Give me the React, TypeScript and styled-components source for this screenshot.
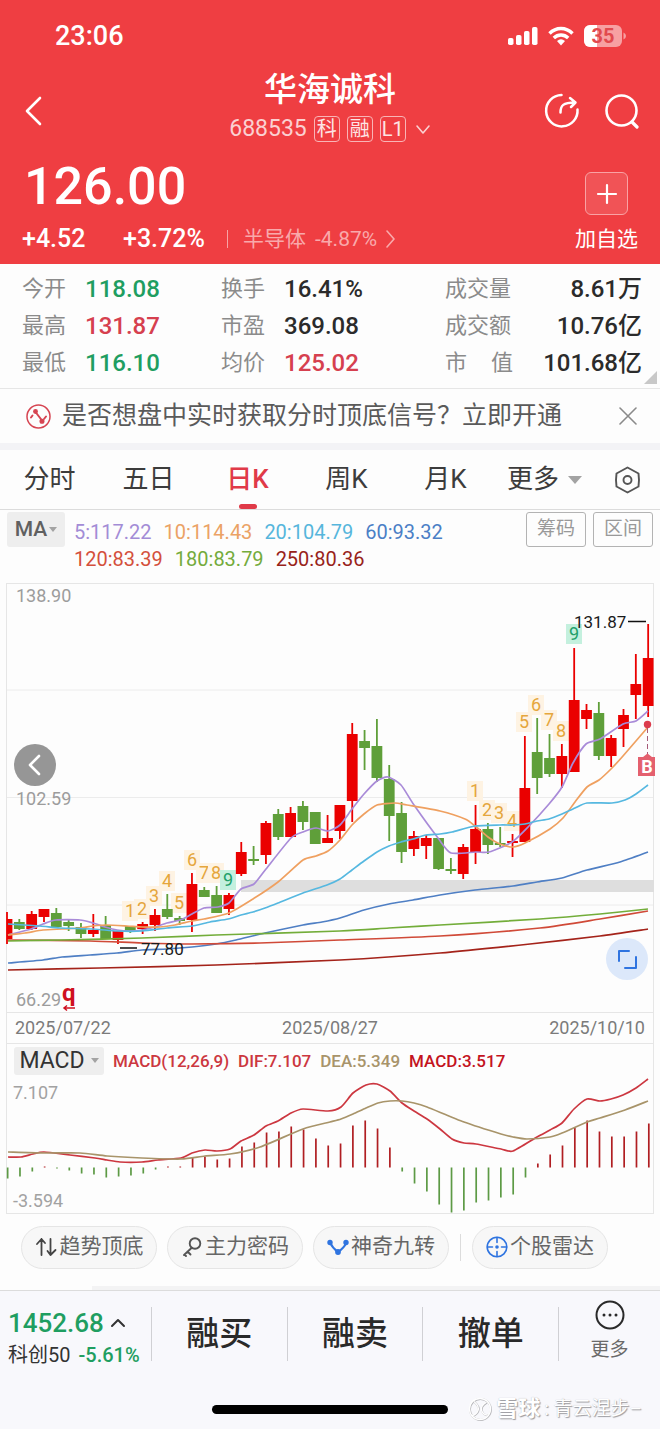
import React from 'react';
import styled, { createGlobalStyle, css } from 'styled-components';

const GlobalStyle = createGlobalStyle`
  * { box-sizing: border-box; }
  body {
    margin: 0;
    background: #fdfdfd;
    color: #333;
    font-family: Roboto, "Noto Sans CJK SC", sans-serif;
    font-size: 22px;
    line-height: 1.2;
  }
  button {
    margin: 0;
    padding: 0;
    border: 0;
    background: none;
    color: inherit;
    font: inherit;
    cursor: pointer;
    white-space: nowrap;
  }
  svg { display: block; flex-shrink: 0; }
`;

const RED = '#ef3e42';
const UP = '#d6404f';
const DOWN = '#1f9e61';
const LINE = '#e6e6e6';

const Page = styled.main`
  display: flex;
  flex-direction: column;
  min-height: 100vh;
`;

/* ---------- header ---------- */

const Header = styled.header`
  background: ${RED};
  color: #fff;
  height: 264px;
`;

const StatusBar = styled.div`
  display: flex;
  align-items: center;
  justify-content: space-between;
  height: 72px;
  padding: 0 34px 0 55px;
  font-size: 27px;
  font-weight: 500;
`;

const StatusIcons = styled.div`
  display: flex;
  align-items: center;
  gap: 10px;
`;

const TitleBar = styled.div`
  display: grid;
  grid-template-columns: 1fr auto 1fr;
  align-items: center;
  height: 76px;
  padding: 0 20px;
`;

const TitleBlock = styled.div`
  display: flex;
  flex-direction: column;
  align-items: center;
`;

const Title = styled.h1`
  margin: 0;
  font-size: 33px;
  line-height: 36px;
  font-weight: 500;
`;

const SubTitle = styled.div`
  display: flex;
  align-items: center;
  gap: 7px;
  height: 42px;
  font-size: 23px;
`;

const Code = styled.span`
  color: #fbd0d1;
`;

const Tag = styled.span`
  display: flex;
  align-items: center;
  justify-content: center;
  width: 26px;
  height: 26px;
  border: 1px solid #f9b4b6;
  border-radius: 4px;
  color: #fde4e4;
  font-size: 20px;
  line-height: 24px;
`;

const HeaderActions = styled.div`
  display: flex;
  justify-content: flex-end;
  gap: 24px;
`;

const PriceArea = styled.section`
  display: flex;
  justify-content: space-between;
  padding: 6px 22px 0;
`;

const Price = styled.div`
  padding-left: 2px;
  font-size: 52px;
  line-height: 66px;
  font-weight: 500;
`;

const ChangeRow = styled.div`
  display: flex;
  align-items: center;
  height: 38px;
  font-size: 25px;
  font-weight: 500;
`;

const Change = styled.span`
  width: 101px;
`;

const Sector = styled.button`
  display: flex;
  align-items: center;
  gap: 9px;
  margin-left: 3px;
  padding-left: 15px;
  border-left: 1px solid #f7a3a5;
  color: #f9a9ab;
  font-size: 21px;
  line-height: 18px;
  font-weight: 400;
`;

const AddButton = styled.button`
  display: flex;
  flex-direction: column;
  align-items: center;
  gap: 9px;
  margin-top: 18px;
  font-size: 21px;
  line-height: 30px;
`;

const PlusBox = styled.span`
  display: flex;
  align-items: center;
  justify-content: center;
  width: 43px;
  height: 43px;
  border: 1px solid #f9a2a4;
  border-radius: 6px;
  background: #f15356;
`;

/* ---------- quote figures ---------- */

const Stats = styled.dl`
  position: relative;
  display: grid;
  grid-template-columns: 199px 1fr 197px;
  margin: 0;
  padding: 7px 18px 6px 22px;
  border-bottom: 1px solid ${LINE};
`;

const Stat = styled.div`
  display: flex;
  align-items: center;
  height: 37px;
`;

const StatName = styled.dt<{ $wide?: boolean }>`
  display: flex;
  justify-content: space-between;
  width: ${(p) => (p.$wide ? 68 : 45)}px;
  color: #8b8b8b;
  font-size: 22px;
`;

const StatValue = styled.dd<{ $tone?: string; $end?: boolean }>`
  margin: 0 0 0 18px;
  color: ${(p) => p.$tone || '#2b2b2b'};
  font-size: 24px;
  font-weight: 500;
  white-space: nowrap;
  ${(p) => p.$end && css`margin-left: auto;`}
`;

const Corner = styled.span`
  position: absolute;
  right: 3px;
  bottom: 4px;
  border-left: 13px solid transparent;
  border-bottom: 13px solid #c8c8c8;
`;

const Notice = styled.aside`
  display: flex;
  align-items: center;
  gap: 11px;
  height: 61px;
  padding: 0 23px 0 26px;
  border-bottom: 7px solid #f3f3f6;
  color: #5a5a5a;
  font-size: 25px;
`;

const NoticeText = styled.span`
  flex: 1;
  white-space: nowrap;
`;

/* ---------- period tabs ---------- */

const Tabs = styled.nav`
  display: grid;
  grid-template-columns: repeat(6, 3fr) 2fr;
  height: 60px;
  border-bottom: 1px solid #dcdcdc;
  font-size: 26px;
`;

const Tab = styled.button<{ $active?: boolean }>`
  position: relative;
  display: flex;
  align-items: center;
  justify-content: center;
  gap: 9px;
  color: ${(p) => (p.$active ? '#e03a48' : '#3c3c3c')};
  ${(p) => p.$active && css`
    font-weight: 500;
    &::after {
      content: '';
      position: absolute;
      bottom: 0;
      left: 50%;
      width: 18px;
      height: 5px;
      margin-left: -9px;
      border-radius: 3px;
      background: #e03a48;
    }
  `}
`;

const Caret = styled.span<{ $size?: number }>`
  border: ${(p) => p.$size || 4}px solid transparent;
  border-top: ${(p) => (p.$size || 4) + 1}px solid #a3a3a3;
  border-bottom: 0;
`;

/* ---------- indicators and charts ---------- */

const IndicatorBar = styled.div`
  display: flex;
  align-items: flex-start;
  height: 73px;
  padding: 2px 7px 0;
`;

const Picker = styled.button<{ $pale?: boolean }>`
  display: flex;
  align-items: center;
  justify-content: center;
  gap: ${(p) => (p.$pale ? 6 : 2)}px;
  width: ${(p) => (p.$pale ? 90 : 58)}px;
  height: ${(p) => (p.$pale ? 28 : 35)}px;
  border-radius: 3px;
  background: #eee;
  color: ${(p) => (p.$pale ? '#333' : '#606060')};
  font-size: ${(p) => (p.$pale ? 23 : 21)}px;
  font-weight: ${(p) => (p.$pale ? 400 : 500)};
`;

const Averages = styled.div`
  display: flex;
  flex: 1;
  flex-wrap: wrap;
  column-gap: 12px;
  margin: 7px 60px 0 9px;
  font-size: 20px;
  line-height: 27px;
  white-space: nowrap;
`;

const Tint = styled.span<{ $c: string; $bold?: boolean }>`
  color: ${(p) => p.$c};
  ${(p) => p.$bold && css`font-weight: 500;`}
`;

const OutlineButton = styled.button`
  width: 60px;
  height: 35px;
  margin-left: 7px;
  border: 1px solid #b3b3b3;
  border-radius: 3px;
  color: #999;
  font-size: 19px;
`;

const Frame = styled.section`
  position: relative;
  margin: 0 6px;
  border: 1px solid ${LINE};
`;

const Plot = styled.svg`
  width: 100%;
  height: auto;
  overflow: visible;
`;

const Dates = styled.div`
  display: flex;
  justify-content: space-between;
  padding: 0 8px;
  border-top: 1px solid ${LINE};
  border-bottom: 1px solid ${LINE};
  color: #7b7b7b;
  font-size: 18px;
  line-height: 30px;
`;

const MacdBar = styled.div`
  display: flex;
  align-items: center;
  gap: 9px;
  height: 30px;
  padding: 3px 7px 0;
`;

const MacdValues = styled.div`
  display: flex;
  gap: 9px;
  padding-top: 2px;
  font-size: 17px;
  font-weight: 500;
  white-space: nowrap;
`;

const RoundButton = styled.button<{ $side: 'left' | 'right' }>`
  position: absolute;
  display: flex;
  align-items: center;
  justify-content: center;
  width: 42px;
  height: 42px;
  border-radius: 50%;
  ${(p) => p.$side === 'left'
    ? css`left: 7px; top: 160px; background: #969696;`
    : css`right: 5px; top: 354px; background: #dce8fa;`}
`;

/* ---------- tools and bottom bar ---------- */

const Tools = styled.div`
  display: flex;
  align-items: center;
  gap: 10px;
  height: 76px;
  padding: 0 21px 10px;
  background: linear-gradient(to right, transparent 14%, #f3f3f4 14%) bottom / 100% 4px no-repeat;
`;

const Tool = styled.button`
  display: flex;
  align-items: center;
  justify-content: center;
  gap: 2px;
  width: 136px;
  height: 43px;
  border: 1px solid #e5e5e5;
  border-radius: 22px;
  background: #f7f7f7;
  color: #666;
  font-size: 21px;
`;

const ToolDivider = styled.span`
  width: 1px;
  height: 27px;
  margin: 0 1px;
  background: #dcdcdc;
`;

const Footer = styled.footer`
  position: relative;
  display: flex;
  flex: 1;
  flex-direction: column;
  justify-content: space-between;
  min-height: 139px;
  padding: 16px 0 15px;
  border-top: 1px solid #dcdcdc;
  background: #f8f8fc;
`;

const Trade = styled.div`
  display: grid;
  grid-template-columns: 151px 1fr 1fr 1fr 102px;
  align-items: start;
`;

const IndexQuote = styled.button`
  display: flex;
  flex-direction: column;
  padding-left: 8px;
  line-height: 32px;
  text-align: left;
`;

const IndexValue = styled.span`
  display: flex;
  align-items: center;
  gap: 6px;
  color: ${DOWN};
  font-size: 26px;
  font-weight: 500;
`;

const IndexChange = styled.span`
  display: flex;
  gap: 8px;
  font-size: 20px;
`;

const TradeButton = styled.button`
  height: 54px;
  border-left: 1px solid #d0d0d4;
  color: #2a2a2a;
  font-size: 33px;
  font-weight: 500;
`;

const MoreButton = styled.button`
  display: flex;
  flex-direction: column;
  align-items: center;
  justify-content: center;
  gap: 6px;
  height: 54px;
  padding-bottom: 4px;
  border-left: 1px solid #d0d0d4;
  color: #6a6a6a;
  font-size: 19px;
  line-height: 28px;
`;

const HomeBar = styled.span`
  align-self: center;
  width: 236px;
  height: 9px;
  border-radius: 5px;
  background: #000;
`;

const Watermark = styled.div`
  position: absolute;
  right: 18px;
  bottom: 5px;
  display: flex;
  align-items: center;
  gap: 4px;
  color: #fff;
  font-size: 19px;
  line-height: 30px;
  text-shadow: 1px 1px 1px #9a9a9e, 0 0 1px #b8b8bc;
  white-space: nowrap;
`;

const Brand = styled.strong`
  font-size: 22px;
  font-weight: 700;
`;

/* ---------- chart data ---------- */

const STEP = 12.33;
const xAt = (i: number) => 7 + STEP * i;

// rising flag, high, body top, body bottom, low
type Candle = [number, number, number, number, number];
const candles: Candle[] = [
  [1, 912, 919, 939, 944], [0, 919, 922, 929, 930], [1, 911, 914, 929, 930], [1, 909, 909, 917, 922],
  [0, 908, 913, 927, 927], [0, 919, 922, 926, 931], [0, 923, 927, 934, 938], [1, 914, 930, 934, 937],
  [0, 916, 925, 939, 939], [1, 931, 931, 940, 944], [0, 926, 926, 932, 933], [1, 922, 924, 929, 934],
  [1, 909, 915, 925, 931], [0, 894, 909, 917, 919], [0, 916, 918, 921, 925], [1, 873, 884, 920, 932],
  [0, 887, 890, 897, 897], [0, 886, 895, 913, 913], [1, 893, 895, 909, 915], [1, 842, 852, 874, 876],
  [0, 846, 859, 861, 865], [1, 821, 823, 855, 864], [0, 809, 814, 837, 840], [1, 807, 813, 837, 837],
  [0, 801, 806, 822, 830], [0, 812, 812, 844, 844], [1, 815, 838, 843, 843], [1, 805, 805, 831, 839],
  [1, 723, 734, 801, 822], [0, 730, 741, 748, 770], [0, 719, 746, 778, 782], [0, 765, 779, 816, 841],
  [0, 802, 813, 852, 863], [1, 831, 836, 849, 856], [1, 835, 838, 846, 859], [0, 838, 838, 869, 870],
  [0, 858, 869, 871, 874], [1, 844, 847, 874, 879], [1, 805, 829, 852, 864], [0, 823, 829, 845, 854],
  [0, 827, 843, 845, 847], [1, 834, 841, 843, 857], [1, 736, 788, 842, 842], [0, 718, 752, 778, 794],
  [0, 734, 758, 774, 777], [1, 744, 756, 774, 788], [1, 648, 700, 772, 772], [1, 704, 710, 719, 729],
  [0, 702, 713, 756, 760], [1, 735, 738, 756, 767], [1, 709, 715, 729, 747], [1, 654, 684, 695, 719],
  [1, 624, 658, 706, 717],
];

const averages = [
  { color: '#a98bd8', points: '8,935 31,929 43,924 56,920 80,920 93,923 105,927 117,930 130,931 142,930 155,927 167,923 180,920 192,914 204,908 218,907 229,903 241,889 254,884 266,869 291,838 303,832 316,828 328,831 340,825 352,809 364,794 377,781 388,777 401,785 414,805 438,838 451,853 476,852 489,852 512,842 529,826 549,804 562,787 573,763 586,744 600,739 623,724 636,721 648,711' },
  { color: '#efa060', points: '8,935 25,933 43,930 62,929 80,928 93,926 107,925 127,926 142,927 160,927 175,925 192,921 204,919 229,913 253,899 278,882 303,860 316,856 328,851 340,840 352,825 364,814 377,805 395,803 407,805 440,811 465,819 475,826 488,837 500,844 513,847 525,843 550,829 563,818 575,802 587,787 599,780 611,769 623,756 648,727' },
  { color: '#56b8e0', points: '8,924 40,926 60,928 93,929 117,931 142,931 167,928 192,926 210,922 228,919 241,915 253,912 265,908 278,903 303,893 327,885 340,879 352,870 364,861 377,852 389,846 401,842 413,839 426,835 440,834 452,832 475,826 500,825 513,825 525,824 537,821 549,819 562,814 575,808 587,803 612,803 625,800 636,794 648,785' },
  { color: '#4f7fc4', points: '8,963 43,960 62,957 90,955 117,953 142,950 167,949 192,947 216,944 236,940 265,933 303,925 322,922 340,918 364,910 389,904 413,900 440,895 475,890 513,886 537,882 562,878 587,870 620,862 648,852' },
  { color: '#d04a38', points: '8,940 90,941 142,943 192,944 260,943 340,940 440,936 540,928 600,919 648,911' },
  { color: '#73ad3a', points: '8,941 60,940 142,938 216,935 340,931 389,928 440,925 540,919 600,914 648,909' },
  { color: '#a4231a', points: '8,970 100,968 216,965 340,960 440,953 530,944 600,936 648,929' },
];

// digit, centre x, centre y
const counts: [string, number, number][] = [
  ['1', 130, 911], ['2', 142, 909], ['3', 154, 896], ['4', 167, 881], ['5', 179, 903], ['6', 192, 860],
  ['7', 204, 873], ['8', 216, 873], ['9', 228, 880], ['1', 475, 791], ['2', 487, 810], ['3', 499, 813],
  ['4', 512, 821], ['5', 524, 722], ['6', 536, 705], ['7', 549, 720], ['8', 561, 731], ['9', 574, 634],
];

// bar lengths of the MACD histogram, positive above the zero line
const histogram = [
  -11, -9, -4, 1, -1, -3, -6, -7, -10, -9, -8, -6, -2, 1, 1, 10, 11, 8, 9, 21, 25, 35, 36, 41, 38, 29, 22,
  24, 42, 47, 39, 20, -4, -16, -24, -37, -45, -43, -35, -33, -30, -27, -10, 4, 13, 22, 40, 47, 36, 31, 31, 36, 44,
];

const DIF = '8,1157 21,1157 33,1154 44,1152 70,1155 95,1158 107,1160 120,1162 142,1162 158,1160 181,1158 192,1153 205,1150 217,1151 230,1149 241,1141 254,1135 266,1126 278,1121 291,1113 303,1109 328,1111 341,1107 353,1093 366,1085 377,1084 390,1091 402,1103 414,1111 427,1119 440,1129 452,1139 464,1143 476,1144 501,1149 513,1151 537,1137 550,1130 562,1123 574,1109 587,1099 600,1101 611,1099 623,1095 636,1088 648,1079';
const DEA = '8,1152 43,1153 80,1153 107,1156 142,1158 181,1159 205,1156 230,1154 260,1147 303,1129 330,1122 341,1119 353,1114 366,1108 378,1103 390,1101 402,1101 414,1103 427,1107 464,1122 501,1134 513,1137 527,1139 550,1137 562,1133 587,1122 600,1118 625,1110 648,1101';

// smooths a list of points into a curve through all of them
const curve = (points: string) => {
  const p = points.split(' ').map((s) => s.split(',').map(Number));
  let d = `M${p[0][0]} ${p[0][1]}`;
  for (let i = 0; i < p.length - 1; i += 1) {
    const a = p[Math.max(0, i - 1)];
    const b = p[i];
    const c = p[i + 1];
    const e = p[Math.min(p.length - 1, i + 2)];
    const k = 9;
    d += `C${b[0] + (c[0] - a[0]) / k} ${b[1] + (c[1] - a[1]) / k} ${c[0] - (e[0] - b[0]) / k} ${c[1] - (e[1] - b[1]) / k} ${c[0]} ${c[1]}`;
  }
  return d;
};

const CandleChart = () => (
  <Plot viewBox="7 584 646 428" role="img" aria-label="日K线图">
    <g stroke="#ececec">
      <path d="M7 690H653M7 797.500H653M7 905H653" />
    </g>
    <rect x="241" y="880" width="413" height="12" fill="#dedede" />
    {counts.map(([n, x, y], i) => (
      <g key={i}>
        <rect x={x - 8} y={y - 10} width="16" height="20" fill={n === '9' ? '#c4f0de' : '#fef3e3'} />
        <text x={x} y={y + 6} textAnchor="middle" fontSize="18" fill={n === '9' ? '#22a06a' : '#e5a63c'}>{n}</text>
      </g>
    ))}
    {candles.map(([up, hi, top, bottom, lo], i) => {
      const x = xAt(i);
      const left = Math.max(7, x - 5.4);
      return (
        <g key={i} fill={up ? '#ea0000' : '#5f9f3a'}>
          <rect x={x - 0.9} y={hi} width="1.800" height={lo - hi} />
          <rect x={left} y={top} width={x + 5.4 - left} height={bottom - top} />
        </g>
      );
    })}
    {averages.map((a) => (
      <path key={a.color} d={curve(a.points)} fill="none" stroke={a.color} strokeWidth="1.700" />
    ))}
    <g fontSize="18" fill="#9c9c9c">
      <text x="16" y="602">138.90</text>
      <text x="16" y="805">102.59</text>
      <text x="16" y="1006">66.29</text>
    </g>
    <text x="62" y="1001" fontSize="24" fontWeight="700" fill="#cf1020">q</text>
    <path d="M75 1008H64M67 1005.500L64 1008L67 1010.500" fill="none" stroke="#cf1020" strokeWidth="1.500" />
    <path d="M120 948H137M628 621.500H646" stroke="#111" strokeWidth="1.600" />
    <g fontSize="17" fill="#1a1a1a">
      <text x="141" y="955">77.80</text>
      <text x="574" y="628">131.87</text>
    </g>
    <path d="M647.500 728V754" stroke="#a65a78" strokeDasharray="5 3" />
    <circle cx="647.500" cy="724.500" r="3.700" fill="#dc3c4c" />
    <path d="M638 757H643L647.500 753.500L652 757H655V776H638Z" fill="#e4606e" />
    <text x="647" y="773" textAnchor="middle" fontSize="18" fontWeight="700" fill="#fff">B</text>
  </Plot>
);

const MacdChart = () => (
  <Plot viewBox="7 1074 646 139" role="img" aria-label="MACD">
    {histogram.map((v, i) => (
      <rect
        key={i}
        x={xAt(i) - 0.2}
        y={v > 0 ? 1167.5 - v : 1167.5}
        width="1.700"
        height={Math.abs(v)}
        fill={v > 0 ? '#b01e22' : '#5d9a45'}
      />
    ))}
    <path d={curve(DIF)} fill="none" stroke="#cc3740" strokeWidth="1.700" />
    <path d={curve(DEA)} fill="none" stroke="#a8946a" strokeWidth="1.700" />
    <g fontSize="18" fill="#a2a2a2">
      <text x="13" y="1099">7.107</text>
      <text x="13" y="1207">-3.594</text>
    </g>
  </Plot>
);

/* ---------- icons ---------- */

const stroke = { fill: 'none', strokeLinecap: 'round' as const, strokeLinejoin: 'round' as const };

const SignalIcon = () => (
  <svg width="30" height="20" viewBox="0 0 30 20" fill="#fff">
    <rect x="0" y="12" width="5.500" height="7" rx="1.800" />
    <rect x="8" y="9" width="5.500" height="10" rx="1.800" />
    <rect x="16" y="5" width="5.500" height="14" rx="1.800" />
    <rect x="24" y="1" width="5.500" height="18" rx="1.800" />
  </svg>
);

const WifiIcon = () => (
  <svg width="26" height="20" viewBox="0 0 26 20" fill="none" stroke="#fff" strokeWidth="3.400">
    <path d="M1.500 7.500C8 0.800 18 0.800 24.500 7.500" />
    <path d="M5.800 12C10 8 16 8 20.200 12" />
    <path d="M9 15Q13 11.500 17 15L13 19.500Z" fill="#fff" stroke="none" />
  </svg>
);

const BatteryIcon = () => (
  <svg width="42" height="22" viewBox="0 0 42 22">
    <rect x="0" y="0" width="38" height="22" rx="6" fill="#f7a0a2" />
    <path d="M6 0H13V22H6A6 6 0 0 1 0 16V6A6 6 0 0 1 6 0Z" fill="#fff" />
    <path d="M39.500 7.500Q42 8.500 42 11T39.500 14.500Z" fill="#f7a0a2" />
    <text x="19" y="18" textAnchor="middle" fontSize="20" fontWeight="700" fill="#e2494e">35</text>
  </svg>
);

const BackIcon = () => (
  <svg width="28" height="30" viewBox="0 0 28 30" {...stroke} stroke="#fff" strokeWidth="2.600">
    <path d="M20 2L7 15L20 28" />
  </svg>
);

const ShareIcon = () => (
  <svg width="36" height="36" viewBox="0 0 36 36" {...stroke} stroke="#fff" strokeWidth="2.500">
    <path d="M17.500 2A15.700 15.700 0 1 0 33.500 16.500" />
    <path d="M16.500 19.500C16.500 12.500 19 9.500 31 9.500M26 5L31.500 9.500L27 14" />
  </svg>
);

const SearchIcon = () => (
  <svg width="36" height="36" viewBox="0 0 36 36" {...stroke} stroke="#fff" strokeWidth="2.600">
    <circle cx="17.500" cy="17.500" r="15" />
    <path d="M28 29L33 34" strokeWidth="3.200" />
  </svg>
);

const Chevron = ({ d, w, h, color, width = 1.6 }: { d: string; w: number; h: number; color: string; width?: number }) => (
  <svg width={w} height={h} viewBox={`0 0 ${w} ${h}`} {...stroke} stroke={color} strokeWidth={width}>
    <path d={d} />
  </svg>
);

const NoticeIcon = () => (
  <svg width="25" height="25" viewBox="0 0 25 25" {...stroke} stroke="#d64552" strokeWidth="1.500">
    <circle cx="12.500" cy="12.500" r="11.500" />
    <path d="M5 13.500L6.500 11.500M9.500 8L16 16.500M18 15L20 12.500" strokeWidth="2" />
    <circle cx="9.500" cy="7.500" r="1.700" fill="#d64552" />
    <circle cx="16" cy="17.200" r="1.800" fill="#d64552" />
  </svg>
);

const HexIcon = () => (
  <svg width="27" height="28" viewBox="0 0 27 28" {...stroke} stroke="#555" strokeWidth="1.900">
    <path d="M13.500 1.500L24.500 7.500Q25.500 14 24.500 20.500L13.500 26.500L2.500 20.500Q1.500 14 2.500 7.500Z" />
    <circle cx="13.500" cy="14" r="4" />
  </svg>
);

const SortIcon = () => (
  <svg width="23" height="22" viewBox="0 0 23 22" {...stroke} stroke="#444" strokeWidth="1.800">
    <path d="M6.500 19V3M2 8L6.500 3L10 7M15.500 3V19M12.500 15L15.500 19L20.500 14" />
  </svg>
);

const KeyIcon = () => (
  <svg width="22" height="22" viewBox="0 0 22 22" {...stroke} stroke="#555" strokeWidth="1.900">
    <circle cx="14" cy="7.500" r="5.300" />
    <path d="M10.500 12L3 19M6.500 15.500L9.500 18.500M3.500 18.500L5 20" />
  </svg>
);

const NineIcon = () => (
  <svg width="22" height="22" viewBox="0 0 22 22" {...stroke} stroke="#2f74e0" strokeWidth="2">
    <path d="M3 6.500Q5.500 12 11 16Q17 12 19.500 6.500" />
    <g fill="#2f74e0" stroke="none">
      <circle cx="3" cy="6.500" r="2.700" />
      <circle cx="11" cy="16" r="2.900" />
      <circle cx="19" cy="6.500" r="2.700" />
    </g>
  </svg>
);

const RadarIcon = () => (
  <svg width="22" height="22" viewBox="0 0 22 22" {...stroke} stroke="#2f74e0" strokeWidth="1.600">
    <circle cx="11" cy="11" r="9.800" />
    <path d="M11 1.500V6.500M11 15.500V20.500M1.500 11H6.500M15.500 11H20.500" />
    <circle cx="11" cy="11" r="1.800" fill="#2f74e0" stroke="none" />
  </svg>
);

const MoreIcon = () => (
  <svg width="30" height="30" viewBox="0 0 30 30">
    <circle cx="15" cy="15" r="13.500" fill="none" stroke="#2a2a2a" strokeWidth="2" />
    <g fill="#2a2a2a">
      <circle cx="9" cy="15" r="1.500" />
      <circle cx="15" cy="15" r="1.500" />
      <circle cx="21" cy="15" r="1.500" />
    </g>
  </svg>
);

const SnowballIcon = () => (
  <svg width="24" height="24" viewBox="0 0 24 24" {...stroke}>
    <g stroke="#b4b4b8" strokeWidth="1.800">
      <circle cx="12.500" cy="12.500" r="10.500" />
      <path d="M7 5.500Q12 10 10.500 14T5 19M18.500 6Q12.500 10 14 14T19.500 18.500" />
    </g>
    <g stroke="#fff" strokeWidth="1.400">
      <circle cx="12" cy="12" r="10.500" />
      <path d="M6.500 5Q11.500 9.500 10 13.500T4.500 18.500M18 5.500Q12 9.500 13.500 13.500T19 18" />
    </g>
  </svg>
);

/* ---------- page ---------- */

const stats: { name: string; value: string; tone?: string }[] = [
  { name: '今开', value: '118.08', tone: DOWN },
  { name: '换手', value: '16.41%' },
  { name: '成交量', value: '8.61万' },
  { name: '最高', value: '131.87', tone: UP },
  { name: '市盈', value: '369.08' },
  { name: '成交额', value: '10.76亿' },
  { name: '最低', value: '116.10', tone: DOWN },
  { name: '均价', value: '125.02', tone: UP },
  { name: '市值', value: '101.68亿' },
];

const legend = [
  ['5:117.22', '#a38cd6'], ['10:114.43', '#eba265'], ['20:104.79', '#56b6dc'], ['60:93.32', '#4b7fc6'],
  ['120:83.39', '#d4503c'], ['180:83.79', '#74ab3c'], ['250:80.36', '#98231a'],
];

const periods = ['分时', '五日', '日K', '周K', '月K'];

export default function App() {
  return (
    <Page>
      <GlobalStyle />
      <Header>
        <StatusBar>
          <span>23:06</span>
          <StatusIcons>
            <SignalIcon />
            <WifiIcon />
            <BatteryIcon />
          </StatusIcons>
        </StatusBar>
        <TitleBar>
          <button type="button" aria-label="返回"><BackIcon /></button>
          <TitleBlock>
            <Title>华海诚科</Title>
            <SubTitle>
              <Code>688535</Code>
              <Tag>科</Tag>
              <Tag>融</Tag>
              <Tag>L1</Tag>
              <Chevron d="M4 3L10 10L16 3" w={18} h={13} color="#fbd0d1" />
            </SubTitle>
          </TitleBlock>
          <HeaderActions>
            <button type="button" aria-label="分享"><ShareIcon /></button>
            <button type="button" aria-label="搜索"><SearchIcon /></button>
          </HeaderActions>
        </TitleBar>
        <PriceArea>
          <div>
            <Price>126.00</Price>
            <ChangeRow>
              <Change>+4.52</Change>
              <Change>+3.72%</Change>
              <Sector type="button">
                <span>半导体</span>
                <span>-4.87%</span>
                <Chevron d="M1 1L8 9L1 17" w={10} h={18} color="#f9a9ab" />
              </Sector>
            </ChangeRow>
          </div>
          <AddButton type="button">
            <PlusBox>
              <Chevron d="M11 2V20M2 11H20" w={22} h={22} color="#fff" width={2.2} />
            </PlusBox>
            加自选
          </AddButton>
        </PriceArea>
      </Header>

      <Stats>
        {stats.map((s, i) => (
          <Stat key={s.name}>
            <StatName $wide={i % 3 === 2}>
              {s.name === '市值' ? <><span>市</span><span>值</span></> : s.name}
            </StatName>
            <StatValue $tone={s.tone} $end={i % 3 === 2}>{s.value}</StatValue>
          </Stat>
        ))}
        <Corner />
      </Stats>

      <Notice>
        <NoticeIcon />
        <NoticeText>是否想盘中实时获取分时顶底信号？立即开通</NoticeText>
        <button type="button" aria-label="关闭">
          <Chevron d="M1 1L17 17M17 1L1 17" w={18} h={18} color="#8a8a8a" />
        </button>
      </Notice>

      <Tabs>
        {periods.map((p) => (
          <Tab key={p} type="button" $active={p === '日K'}>{p}</Tab>
        ))}
        <Tab type="button">更多<Caret $size={7} /></Tab>
        <Tab type="button" aria-label="设置"><HexIcon /></Tab>
      </Tabs>

      <IndicatorBar>
        <Picker type="button">MA<Caret /></Picker>
        <Averages>
          {legend.map(([t, c]) => <Tint key={t} $c={c}>{t}</Tint>)}
        </Averages>
        <OutlineButton type="button">筹码</OutlineButton>
        <OutlineButton type="button">区间</OutlineButton>
      </IndicatorBar>

      <Frame>
        <CandleChart />
        <RoundButton type="button" $side="left" aria-label="向前">
          <Chevron d="M13 2L4 11L13 20" w={18} h={22} color="#fff" width={2.6} />
        </RoundButton>
        <RoundButton type="button" $side="right" aria-label="全屏">
          <Chevron d="M13 3H3V13M9 20H20V9" w={22} h={22} color="#2f74e0" width={2} />
        </RoundButton>
        <Dates>
          <span>2025/07/22</span>
          <span>2025/08/27</span>
          <span>2025/10/10</span>
        </Dates>
        <MacdBar>
          <Picker type="button" $pale>MACD<Caret /></Picker>
          <MacdValues>
            <Tint $c="#cc3740">MACD(12,26,9)</Tint>
            <Tint $c="#cc3740">DIF:7.107</Tint>
            <Tint $c="#a8946a">DEA:5.349</Tint>
            <Tint $c="#c4141e">MACD:3.517</Tint>
          </MacdValues>
        </MacdBar>
        <MacdChart />
      </Frame>

      <Tools>
        <Tool type="button"><SortIcon />趋势顶底</Tool>
        <Tool type="button"><KeyIcon />主力密码</Tool>
        <Tool type="button"><NineIcon />神奇九转</Tool>
        <ToolDivider />
        <Tool type="button"><RadarIcon />个股雷达</Tool>
      </Tools>

      <Footer>
        <Trade>
          <IndexQuote type="button">
            <IndexValue>
              1452.68
              <Chevron d="M2 9L8 3L14 9" w={16} h={12} color="#333" width={2} />
            </IndexValue>
            <IndexChange>
              <span>科创50</span>
              <Tint $c={DOWN} $bold>-5.61%</Tint>
            </IndexChange>
          </IndexQuote>
          <TradeButton type="button">融买</TradeButton>
          <TradeButton type="button">融卖</TradeButton>
          <TradeButton type="button">撤单</TradeButton>
          <MoreButton type="button">
            <MoreIcon />
            更多
          </MoreButton>
        </Trade>
        <HomeBar />
        <Watermark>
          <SnowballIcon />
          <Brand>雪球</Brand>
          <span>: 青云涅步–</span>
        </Watermark>
      </Footer>
    </Page>
  );
}
